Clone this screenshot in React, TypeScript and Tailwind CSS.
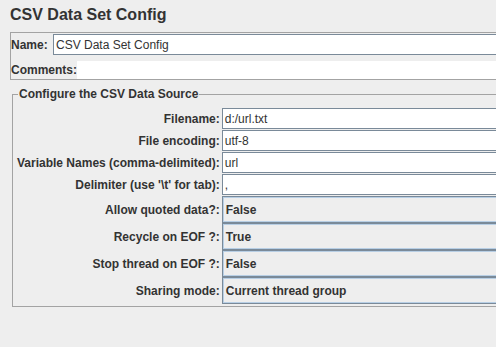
const textRows = [
  { label: 'Filename:', value: 'd:/url.txt' },
  { label: 'File encoding:', value: 'utf-8' },
  { label: 'Variable Names (comma-delimited):', value: 'url' },
  { label: "Delimiter (use '\\t' for tab):", value: ',' },
];

const comboRows = [
  { label: 'Allow quoted data?:', value: 'False' },
  { label: 'Recycle on EOF ?:', value: 'True' },
  { label: 'Stop thread on EOF ?:', value: 'False' },
  { label: 'Sharing mode:', value: 'Current thread group' },
];

export default function App() {
  return (
    <div className="w-[496px] h-[347px] overflow-hidden bg-[#eeeeee] font-['Liberation_Sans',Arial,sans-serif] text-[#333333]">
      <div className="w-[530px]">
        <div className="pl-[10px] pt-[6px] mb-[8px] text-[16px] leading-[18px] font-bold">CSV Data Set Config</div>

        <div className="ml-[10px] border border-[#a3a3a3] pt-px">
          <div className="flex items-center h-[21px]">
            <span className="text-[12px] font-bold w-[42px]">Name:</span>
            <div className="flex-1 h-[21px] border border-[#7a8a99] bg-white pl-[2px] flex items-center text-[12px]">
              CSV Data Set Config
            </div>
          </div>
          <div className="flex items-center h-[18px] mt-[6px]">
            <span className="text-[12px] font-bold w-[66px]">Comments:</span>
            <div className="flex-1 h-[18px] bg-white" />
          </div>
        </div>

        <fieldset className="ml-[12px] mt-[7px] border border-[#a3a3a3] pl-[4px] pt-[7px] pb-[2px]">
          <legend className="ml-[1px] px-[1px] text-[12px] leading-[14px] font-bold">Configure the CSV Data Source</legend>
          <div className="grid grid-cols-[auto_1fr] grid-rows-[repeat(4,22px)_repeat(4,27px)] gap-x-[2px] text-[12px]">
            {textRows.map((row) => (
              <div key={row.label} className="contents">
                <div className="h-[21px] flex items-center justify-end font-bold whitespace-nowrap">{row.label}</div>
                <div className="h-[21px] border border-[#7a8a99] bg-white pl-[2px] flex items-center">{row.value}</div>
              </div>
            ))}
            {comboRows.map((row) => (
              <div key={row.label} className="contents">
                <div className="h-[27px] flex items-center justify-end font-bold whitespace-nowrap">{row.label}</div>
                <div className="h-[27px] border border-[#7a8a99] bg-[#eeeeee] shadow-[inset_0_0_0_1px_#b8cfe5] pl-[3px] flex items-center font-bold">
                  {row.value}
                </div>
              </div>
            ))}
          </div>
        </fieldset>
      </div>
    </div>
  );
}
